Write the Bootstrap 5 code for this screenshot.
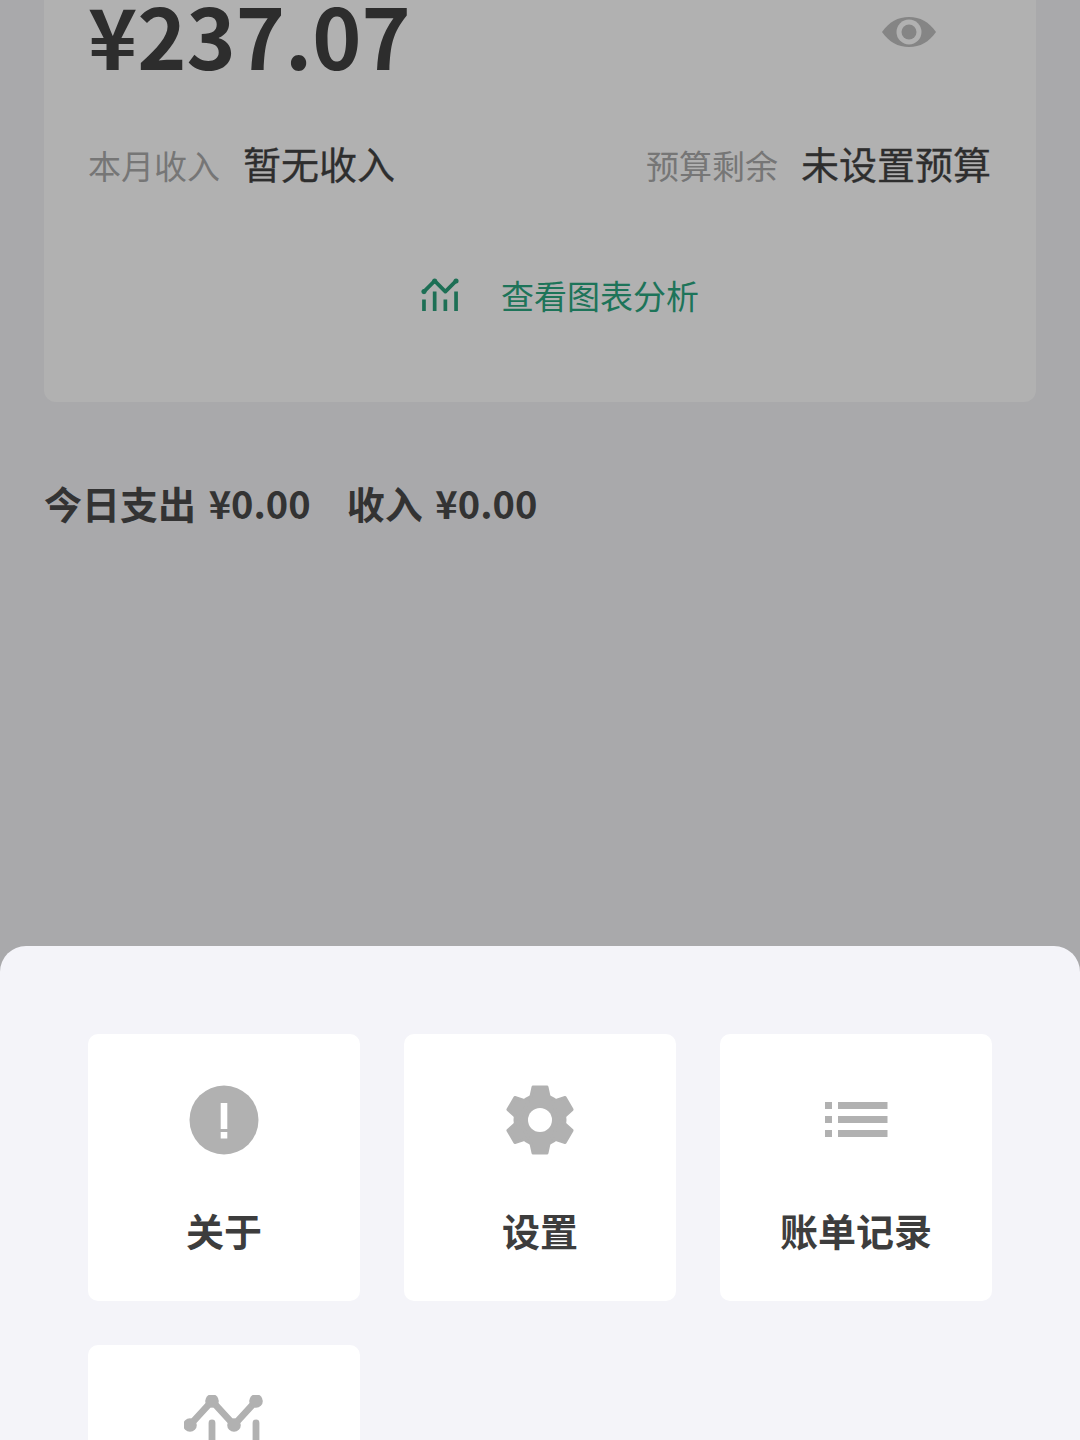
<!DOCTYPE html>
<html lang="zh-CN">
<head>
<meta charset="utf-8">
<title>账单</title>
<link rel="stylesheet" href="https://cdn.jsdelivr.net/npm/bootstrap@5.3.0/dist/css/bootstrap.min.css">
<style>
html,body{height:1440px;overflow:hidden}
body{background:#a9a9ab;font-family:"Noto Sans CJK SC","Noto Sans",sans-serif;color:#2e2e2e}
.ledger-page{height:1440px;display:flex;flex-direction:column;overflow:hidden}
.summary-card{margin:0 44px;height:402px;background:#b1b1b1;border:0;border-radius:0 0 12px 12px;padding:0 44px}
.amount-row{height:66px}
.amount-text{font-size:83.5px;font-weight:700;line-height:68px;color:#2d2d2d}
.eye-icon{width:54px;height:32px;margin:16px 56px 0 0}
.stat-row{margin-top:72px;height:50px}
.stat-label{font-size:33px;color:#767676;margin:2px 24px 0 0;line-height:50px}
.stat-value{font-size:38px;color:#2e2e2e;line-height:50px;margin-left:-1px;-webkit-text-stroke:.3px #2e2e2e}
.stat-end{padding-right:1px}
.chart-link{margin-top:82px;height:50px;gap:41px;color:#1d7459;font-size:33px;line-height:50px;padding-left:40px}
.chart-link svg{width:39px;height:35px;color:#1d6f55}
.today-row{margin:73px 0 0 44px;height:56px;font-size:38px;font-weight:700;line-height:56px;color:#333;gap:36px;word-spacing:4px}
.action-sheet{margin-top:auto;height:494px;background:#f4f4f9;border-radius:26px 26px 0 0;padding:88px 88px 0;gap:44px;align-content:flex-start}
.action-tile{width:272px;height:267px;background:#fff;border:0;border-radius:10px;padding-top:51px}
.tile-icon{height:70px;width:100%}
.tile-label{margin-top:47px;font-size:38px;font-weight:700;line-height:56px;color:#3d3d3d}
.chart-large{width:80px;height:72px;color:#b1b1b1;flex:none}
</style>
</head>
<body>
<div class="ledger-page">
  <section class="card summary-card">
    <div class="amount-row d-flex justify-content-between align-items-start">
      <div class="amount-text">¥237.07</div>
      <svg class="eye-icon" viewBox="0 0 54 32" aria-hidden="true"><path d="M0 16C7 6 16 1 27 1s20 5 27 15c-7 10-16 15-27 15S7 26 0 16Z" fill="#858585"/><circle cx="27" cy="16" r="12.5" fill="#b1b1b1"/><circle cx="27" cy="16" r="7.5" fill="#858585"/></svg>
    </div>
    <div class="stat-row d-flex justify-content-between">
      <div class="d-flex"><span class="stat-label">本月收入</span><span class="stat-value">暂无收入</span></div>
      <div class="d-flex stat-end"><span class="stat-label">预算剩余</span><span class="stat-value">未设置预算</span></div>
    </div>
    <div class="chart-link d-flex justify-content-center align-items-center">
      <svg viewBox="0 0 40 36" fill="none" stroke="currentColor" stroke-width="3.8" aria-hidden="true"><path d="M3 14 14 3 25 14 36 3" stroke-linecap="round" stroke-linejoin="round"/><path d="M3 22V34M14 14V34M25 22V34M36 14V34"/><circle cx="3" cy="14" r="2.6" fill="currentColor" stroke="none"/><circle cx="14" cy="3" r="2.6" fill="currentColor" stroke="none"/><circle cx="36" cy="3" r="2.6" fill="currentColor" stroke="none"/></svg>
      <span>查看图表分析</span>
    </div>
  </section>
  <div class="today-row d-flex"><span>今日支出 ¥0.00</span><span>收入 ¥0.00</span></div>
  <section class="action-sheet d-flex flex-wrap">
    <div class="card action-tile align-items-center">
      <div class="tile-icon d-flex justify-content-center align-items-center">
        <svg width="70" height="70" viewBox="0 0 70 70" aria-hidden="true"><circle cx="35" cy="35" r="34.5" fill="#b1b1b1"/><rect x="31.7" y="18" width="6.6" height="26" fill="#fff"/><rect x="31.7" y="47" width="6.6" height="6.5" fill="#fff"/></svg>
      </div>
      <div class="tile-label">关于</div>
    </div>
    <div class="card action-tile align-items-center">
      <div class="tile-icon d-flex justify-content-center align-items-center">
        <svg width="70" height="70" viewBox="0 0 70 70" fill="#b1b1b1" stroke="#b1b1b1" stroke-width="3" stroke-linejoin="round" aria-hidden="true"><circle cx="35" cy="35" r="25"/><polygon id="gear-tooth" points="28,2 42,2 45,16 25,16"/><use href="#gear-tooth" transform="rotate(60 35 35)"/><use href="#gear-tooth" transform="rotate(120 35 35)"/><use href="#gear-tooth" transform="rotate(180 35 35)"/><use href="#gear-tooth" transform="rotate(240 35 35)"/><use href="#gear-tooth" transform="rotate(300 35 35)"/><circle cx="35" cy="35" r="12" fill="#fff" stroke="none"/></svg>
      </div>
      <div class="tile-label">设置</div>
    </div>
    <div class="card action-tile align-items-center">
      <div class="tile-icon d-flex justify-content-center align-items-center">
        <svg width="64" height="36" viewBox="0 0 64 36" fill="#b1b1b1" aria-hidden="true"><rect x="1" y="0" width="7" height="7"/><rect x="14" y="0" width="49.500" height="7"/><rect x="1" y="14" width="7" height="7"/><rect x="14" y="14" width="49.500" height="7"/><rect x="1" y="28" width="7" height="7"/><rect x="14" y="28" width="49.500" height="7"/></svg>
      </div>
      <div class="tile-label">账单记录</div>
    </div>
    <div class="card action-tile align-items-center">
      <div class="tile-icon d-flex justify-content-center align-items-center">
        <svg class="chart-large" viewBox="0 0 40 36" fill="none" stroke="currentColor" stroke-width="3.4" aria-hidden="true"><path d="M3 15 14 3 25 15 36 3"/><path d="M3 25V34M14 14V34M25 25V34M36 14V34" stroke-linecap="round"/><circle cx="3" cy="15" r="3.4" fill="currentColor" stroke="none"/><circle cx="14" cy="3" r="3.4" fill="currentColor" stroke="none"/><circle cx="25" cy="15" r="3.4" fill="currentColor" stroke="none"/><circle cx="36" cy="3" r="3.4" fill="currentColor" stroke="none"/></svg>
      </div>
    </div>
  </section>
</div>
<script src="https://cdn.jsdelivr.net/npm/bootstrap@5.3.0/dist/js/bootstrap.bundle.min.js"></script>
</body>
</html>
